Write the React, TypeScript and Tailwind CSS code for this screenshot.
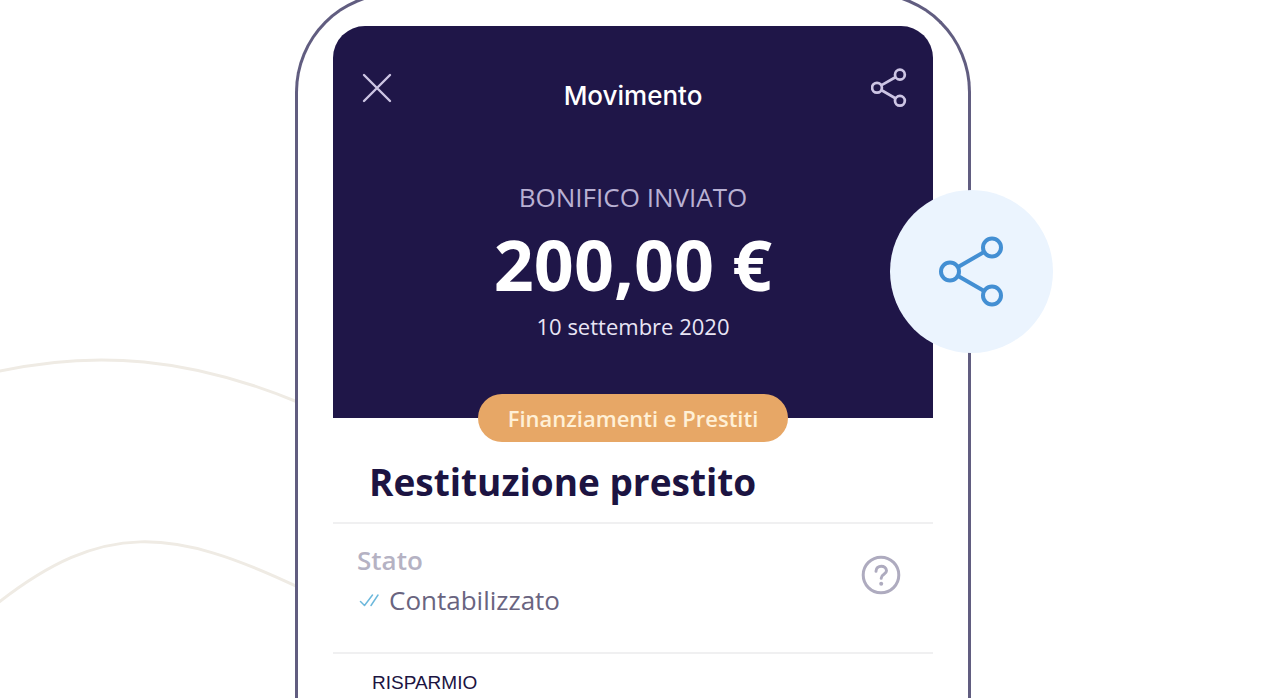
import React from "react";

function ShareIcon({ className }: { className: string }) {
  return (
    <svg viewBox="0 0 66 72" fill="none" stroke="currentColor" className={className} aria-hidden="true">
      <circle cx="11" cy="35.5" r="9" />
      <circle cx="53" cy="11.5" r="9" />
      <circle cx="53" cy="59.5" r="9" />
      <path d="M19.5 30.8 44.7 16.2M19.5 40.2 44.7 54.8" />
    </svg>
  );
}

function CloseIcon() {
  return (
    <svg viewBox="0 0 30 30" fill="none" stroke="currentColor" strokeWidth="2.4" strokeLinecap="round" className="w-[30px] h-[30px]" aria-hidden="true">
      <path d="M2 2 28 28M28 2 2 28" />
    </svg>
  );
}

function DoubleCheckIcon() {
  return (
    <svg viewBox="0 0 22 16" fill="none" stroke="currentColor" strokeWidth="1.5" strokeLinecap="round" strokeLinejoin="round" className="w-[22px] h-4 text-[#6cb8dc]" aria-hidden="true">
      <path d="M3.5 9.5 7.5 13.5 15.5 3M14 13.5 21 3" />
    </svg>
  );
}

function HelpIcon() {
  return (
    <svg viewBox="0 0 40 40" fill="none" stroke="currentColor" strokeWidth="3" className="w-10 h-10" aria-hidden="true">
      <circle cx="20" cy="20" r="17.8" />
      <path d="M15 16.2C15 9.5 25.5 9.8 25.5 15.8C25.5 19.5 20.2 19.2 20.2 23.2" strokeLinecap="round" />
      <circle cx="20.2" cy="28.8" r="2" fill="currentColor" stroke="none" />
    </svg>
  );
}

export default function App() {
  const movement = {
    type: "BONIFICO INVIATO",
    amount: "200,00 €",
    date: "10 settembre 2020",
    category: "Finanziamenti e Prestiti",
    title: "Restituzione prestito",
    status: "Contabilizzato",
    account: "RISPARMIO",
  };

  return (
    <main className="relative flex justify-center min-h-screen overflow-hidden bg-white pr-[5px] font-['Open_Sans','Noto_Sans',sans-serif]">
      {/* Background waves */}
      <svg viewBox="0 0 300 260" fill="none" stroke="#efebe4" strokeWidth="3" className="absolute left-0 top-[350px] w-[300px] h-[260px]" aria-hidden="true">
        <path d="M-2 21.5C95 0 190 7 300 53" />
        <path d="M-2 253C103 171 172 177 300 238" />
      </svg>

      <div className="relative w-full max-w-[676px] -mt-2 px-[35px] pt-[31px] border-[3px] border-b-0 border-[#615d80] rounded-t-[100px] bg-white">
        <header className="h-[392px] px-[26px] pt-10 rounded-t-[32px] bg-[#1f1648] text-center">
          <div className="grid grid-cols-[36px_1fr_36px] items-start">
            <button aria-label="Chiudi" className="flex justify-center mt-[7px] text-[#cdc5e4]">
              <CloseIcon />
            </button>
            <h1 className="mt-[14px] text-[26px] leading-8 font-medium text-white font-['Inter',sans-serif]">Movimento</h1>
            <button aria-label="Condividi" className="mt-[2px] text-[#cdc5e4]">
              <ShareIcon className="w-9 h-10 stroke-5" />
            </button>
          </div>
          <p className="mt-[69px] text-[26px] leading-8 text-[#b9b1d3]">{movement.type}</p>
          <p className="mt-1 text-[70px] leading-[94px] font-bold text-white">{movement.amount}</p>
          <p className="text-[22px] leading-[30px] text-[#e9e5f5]">{movement.date}</p>
        </header>

        <div className="relative flex justify-center -mt-6">
          <span className="h-12 px-[30px] rounded-full bg-[#e7a766] text-[22px] leading-[48px] font-semibold text-[#fff0d6]">
            {movement.category}
          </span>
        </div>

        <h2 className="h-[82px] px-9 pt-4 text-[37px] leading-[48px] font-bold text-[#1c1442] border-b-2 border-[#f0f0f1]">
          {movement.title}
        </h2>

        <section className="flex items-start justify-between h-[130px] pl-6 pr-8 pt-[18px] border-b-2 border-[#f0f0f1]">
          <div>
            <h3 className="text-[26px] leading-9 font-semibold text-[#b5b2c3]">Stato</h3>
            <p className="flex items-center gap-[10px] mt-1 text-[26px] leading-9 text-[#69647f]">
              <DoubleCheckIcon />
              {movement.status}
            </p>
          </div>
          <button aria-label="Aiuto" className="mt-[13px] text-[#aeabbf]">
            <HelpIcon />
          </button>
        </section>

        <p className="px-[39px] pt-[17px] text-[19px] leading-6 text-[#1c1442] font-['Liberation_Sans',sans-serif]">{movement.account}</p>

        <button
          aria-label="Condividi movimento"
          className="absolute top-[195px] -right-[85px] flex items-center justify-center w-[163px] h-[163px] rounded-full bg-[#ebf4fe] text-[#438fd3]"
        >
          <ShareIcon className="w-[66px] h-[72px] stroke-[4px]" />
        </button>
      </div>
    </main>
  );
}
